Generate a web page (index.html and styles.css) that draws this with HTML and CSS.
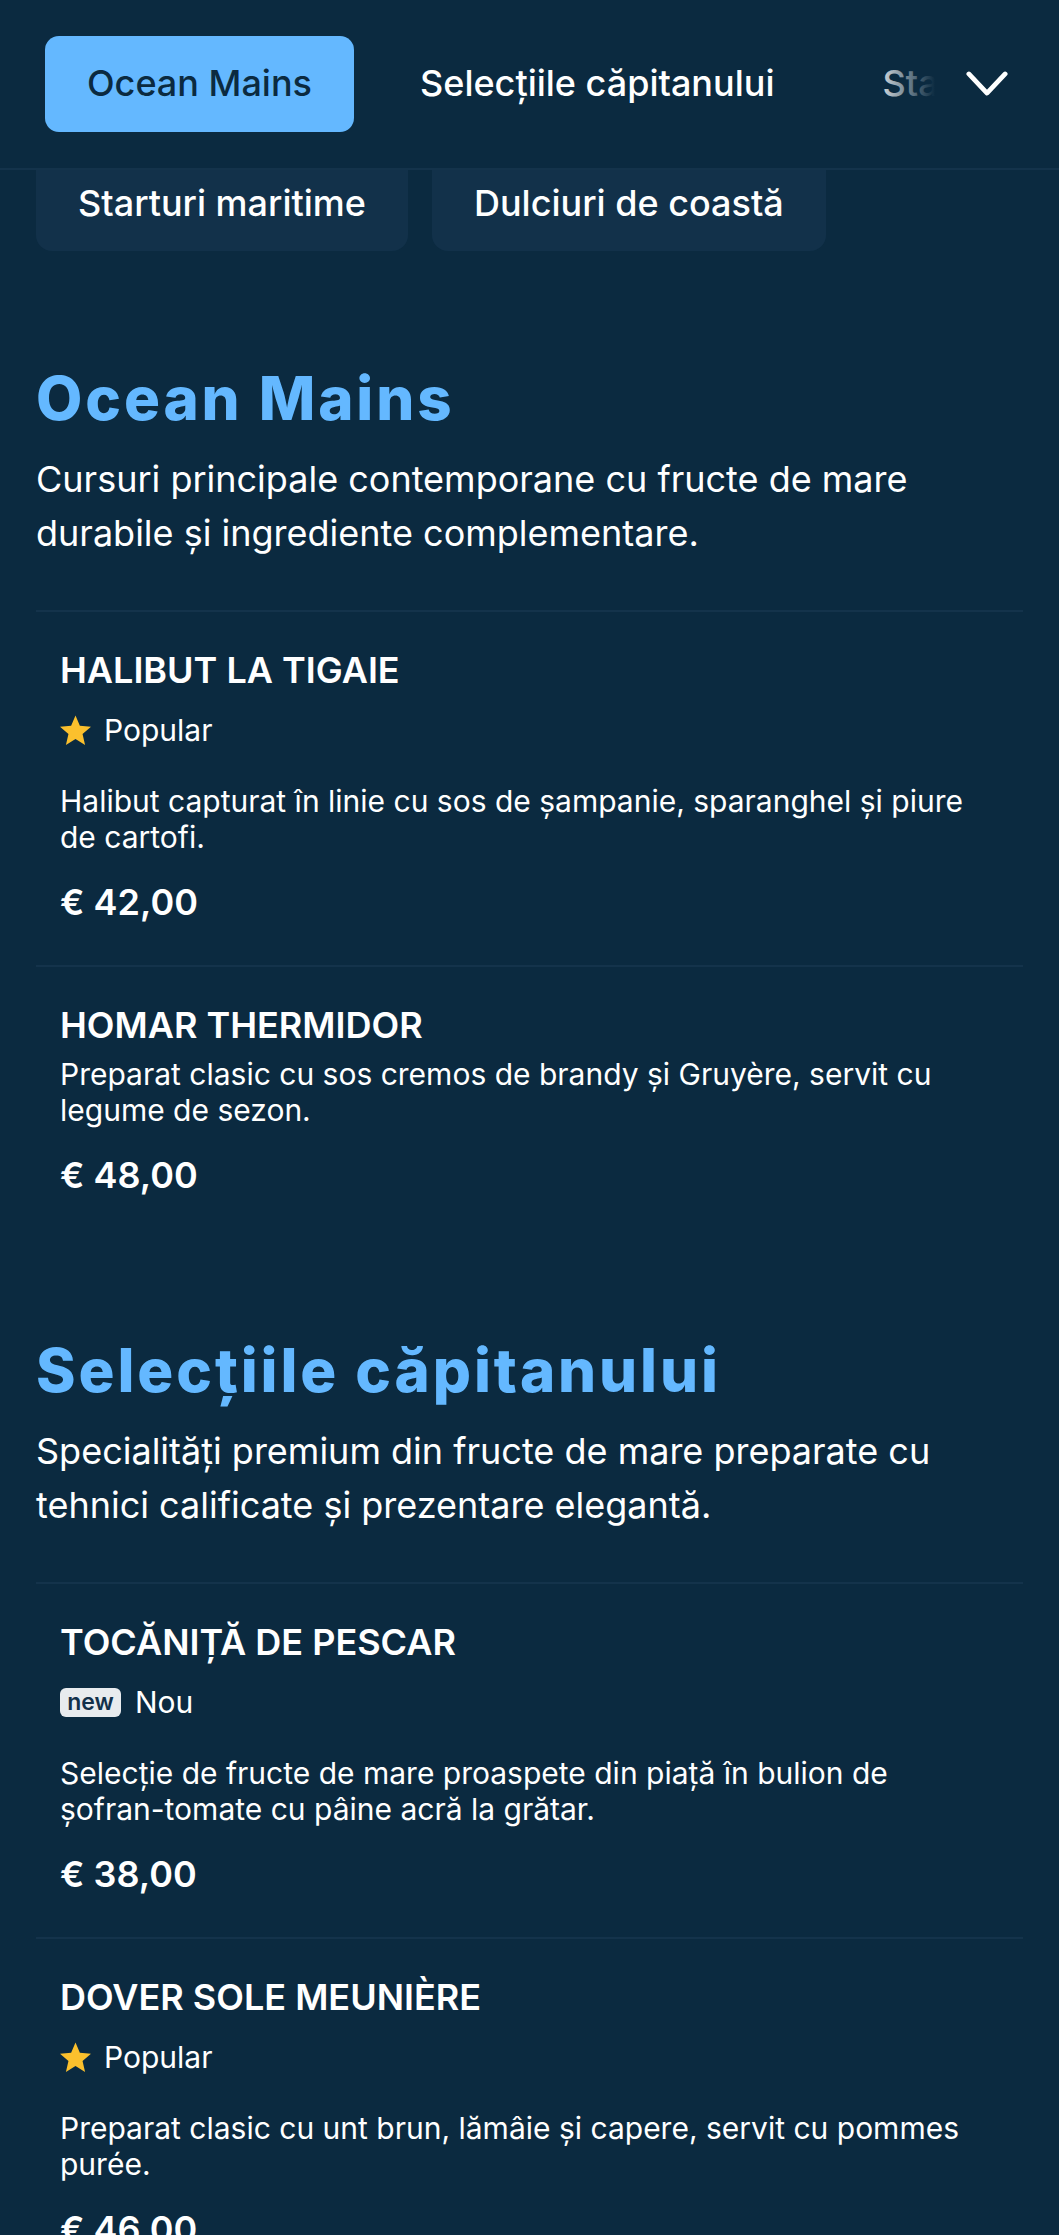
FILE: index.html
```html
<!DOCTYPE html>
<html lang="ro">
<head>
<meta charset="utf-8">
<title>Meniu</title>
<link rel="stylesheet" href="styles.css">
</head>
<body>
<header class="topbar">
  <nav class="tabs">
    <a class="tab tab-active">Ocean Mains</a>
    <a class="tab">Selecțiile căpitanului</a>
    <a class="tab">Starturi maritime</a>
  </nav>
  <div class="fade">
    <svg class="chevron" viewBox="0 0 44 28" aria-hidden="true"><path d="M3 4 L22 24 L41 4" fill="none" stroke="#fff" stroke-width="5" stroke-linecap="round" stroke-linejoin="round"/></svg>
  </div>
</header>
<div class="subnav">
  <a class="chip">Starturi maritime</a>
  <a class="chip">Dulciuri de coastă</a>
</div>
<main>
  <section class="section">
    <h2 class="section-title">Ocean Mains</h2>
    <p class="section-desc">Cursuri principale contemporane cu fructe de mare durabile și ingrediente complementare.</p>
    <article class="item">
      <h3 class="item-title">HALIBUT LA TIGAIE</h3>
      <div class="badge"><svg class="star" viewBox="1 1.2 22 22" aria-hidden="true"><path d="M12 1.5l3.1 7.3 7.9.7-6 5.2 1.8 7.8L12 18.300l-6.800 4.200 1.800-7.800-6-5.200 7.900-.7z" fill="#fbc02d"/></svg><span>Popular</span></div>
      <p class="item-desc">Halibut capturat în linie cu sos de șampanie, sparanghel și piure de cartofi.</p>
      <div class="price">€ 42,00</div>
    </article>
    <article class="item">
      <h3 class="item-title">HOMAR THERMIDOR</h3>
      <p class="item-desc item-desc-tight">Preparat clasic cu sos cremos de brandy și Gruyère, servit cu legume de sezon.</p>
      <div class="price">€ 48,00</div>
    </article>
  </section>
  <section class="section">
    <h2 class="section-title">Selecțiile căpitanului</h2>
    <p class="section-desc">Specialități premium din fructe de mare preparate cu tehnici calificate și prezentare elegantă.</p>
    <article class="item">
      <h3 class="item-title">TOCĂNIȚĂ DE PESCAR</h3>
      <div class="badge badge-new"><span class="new">new</span><span>Nou</span></div>
      <p class="item-desc">Selecție de fructe de mare proaspete din piață în bulion de șofran-tomate cu pâine acră la grătar.</p>
      <div class="price">€ 38,00</div>
    </article>
    <article class="item">
      <h3 class="item-title">DOVER SOLE MEUNIÈRE</h3>
      <div class="badge"><svg class="star" viewBox="1 1.2 22 22" aria-hidden="true"><path d="M12 1.5l3.1 7.3 7.9.7-6 5.2 1.8 7.8L12 18.300l-6.800 4.200 1.800-7.800-6-5.200 7.900-.7z" fill="#fbc02d"/></svg><span>Popular</span></div>
      <p class="item-desc">Preparat clasic cu unt brun, lămâie și capere, servit cu pommes purée.</p>
      <div class="price">€ 46,00</div>
    </article>
  </section>
</main>
</body>
</html>
```
FILE: styles.css
```css
* { box-sizing: border-box; }
html, body { margin: 0; padding: 0; height: 2235px; overflow: hidden; }
body { background: #0b2a40; color: #fff; font-family: Inter, "Liberation Sans", sans-serif; }
h2, h3, p { margin: 0; }

.topbar { position: relative; height: 170px; border-bottom: 2px solid #14334b; padding: 36px 0 0 45px; overflow: hidden; }
.tabs { display: flex; gap: 24px; white-space: nowrap; }
.tab { flex: none; display: flex; align-items: center; justify-content: center; height: 96px; padding: 0 42px 2px; font-size: 36px; font-weight: 500; color: #fff; border-radius: 14px; }
.tab-active { background: #64b8ff; color: #0b2a40; }
.fade { position: absolute; top: 0; right: 0; width: 190px; height: 166px; display: flex; align-items: center; justify-content: flex-end; padding-right: 51px; background: linear-gradient(90deg, rgba(11,42,64,0) 0, #0b2a40 66px); }
.chevron { width: 42px; height: 27px; }

.subnav { display: flex; gap: 24px; height: 81px; padding-left: 36px; overflow: hidden; }
.chip { flex: none; display: flex; align-items: center; height: 96px; margin-top: -15px; padding: 0 42px; font-size: 36px; font-weight: 500; background: #12314a; border-radius: 16px; }

.section { padding: 0 36px; margin-bottom: 96px; }
.section:first-child { margin-top: 111px; }
.section-title { font-size: 60px; line-height: 72px; font-weight: 800; letter-spacing: 2.9px; color: #64b8ff; }
.section-desc { margin-top: 18px; font-size: 36px; line-height: 54px; padding-bottom: 50px; }
.item { border-top: 2px solid #14334b; padding: 34px 24px 41px; }
.item-title { font-size: 36px; line-height: 48px; font-weight: 600; }
.badge { display: flex; align-items: center; gap: 13px; margin-top: 14px; font-size: 30px; line-height: 44px; }
.badge-new { gap: 14px; }
.star { width: 31px; height: 31px; }
.new { width: 61px; height: 29px; display: flex; align-items: center; justify-content: center; background: #e8ebee; color: #12304a; font-size: 23px; font-weight: 600; line-height: 28px; border-radius: 6px; }
.item-desc { margin-top: 31px; font-size: 30px; line-height: 36px; }
.item-desc-tight { margin-top: 7px; }
.price { margin-top: 25px; font-size: 36px; line-height: 44px; font-weight: 600; }
```
